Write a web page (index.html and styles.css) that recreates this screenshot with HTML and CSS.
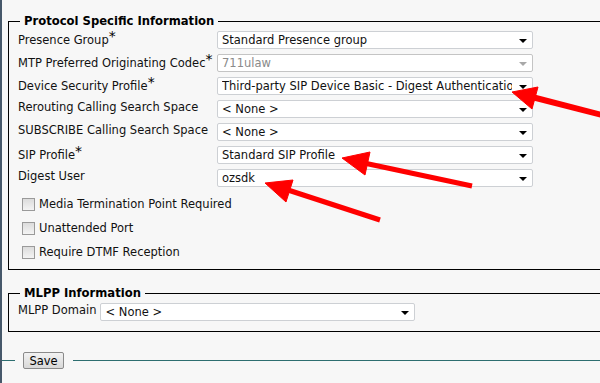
FILE: index.html
```html
<!DOCTYPE html>
<html lang="en">
<head>
  <meta charset="UTF-8">
  <title>Phone Configuration</title>
  <link rel="stylesheet" href="styles.css">
</head>
<body>
  <div class="page">
    <fieldset class="group">
      <legend>Protocol Specific Information</legend>
      <table class="form">
        <tr>
          <td class="label">Presence Group<span class="req">*</span></td>
          <td><span class="select"><select><option>Standard Presence group</option></select></span></td>
        </tr>
        <tr>
          <td class="label">MTP Preferred Originating Codec<span class="req">*</span></td>
          <td><span class="select disabled"><select disabled><option>711ulaw</option></select></span></td>
        </tr>
        <tr>
          <td class="label">Device Security Profile<span class="req">*</span></td>
          <td><span class="select"><select><option>Third-party SIP Device Basic - Digest Authentication</option></select></span></td>
        </tr>
        <tr>
          <td class="label">Rerouting Calling Search Space</td>
          <td><span class="select"><select><option>&lt; None &gt;</option></select></span></td>
        </tr>
        <tr>
          <td class="label">SUBSCRIBE Calling Search Space</td>
          <td><span class="select"><select><option>&lt; None &gt;</option></select></span></td>
        </tr>
        <tr>
          <td class="label">SIP Profile<span class="req">*</span></td>
          <td><span class="select"><select><option>Standard SIP Profile</option></select></span></td>
        </tr>
        <tr>
          <td class="label">Digest User</td>
          <td><span class="select"><select><option>ozsdk</option></select></span></td>
        </tr>
      </table>
      <div class="checks">
        <label class="check"><input type="checkbox"><span>Media Termination Point Required</span></label>
        <label class="check"><input type="checkbox"><span>Unattended Port</span></label>
        <label class="check"><input type="checkbox"><span>Require DTMF Reception</span></label>
      </div>
    </fieldset>

    <fieldset class="group mlpp">
      <legend>MLPP Information</legend>
      <div class="inline-row">
        <span class="label">MLPP Domain</span>
        <span class="select short"><select><option>&lt; None &gt;</option></select></span>
      </div>
    </fieldset>

    <div class="actions">
      <span class="rule lead"></span>
      <button class="btn">Save</button>
      <span class="rule"></span>
    </div>
  </div>

  <svg class="annotations" width="600" height="383" viewBox="0 0 600 383">
    <g fill="#f00" stroke="#f00">
      <line x1="532" y1="97" x2="602" y2="115" stroke-width="6"/>
      <polygon points="512,92 538,87 532,109" stroke-width="1"/>
      <line x1="364" y1="163" x2="472" y2="186" stroke-width="5"/>
      <polygon points="342,158 370,152 365,175" stroke-width="1"/>
      <line x1="288" y1="190" x2="380" y2="220" stroke-width="5"/>
      <polygon points="265,183 293,180 286,202" stroke-width="1"/>
    </g>
  </svg>
</body>
</html>
```

FILE: styles.css
```css
html,
body {
  margin: 0;
  padding: 0;
  height: 100%;
  overflow: hidden;
}

body {
  background: #f7f7f7;
  color: #111;
  font-family: 'DejaVu Sans', Verdana, sans-serif;
  font-size: 11.5px;
  border-left: 2px solid #46586a;
  box-sizing: border-box;
  position: relative;
}

.page {
  padding-left: 6px;
}

.group {
  margin: 13px 0 0;
  padding: 2px 9px 5px 9px;
  border: 1px solid #000;
  border-right: none;
}

.group legend {
  font-size: 11.6px;
  font-weight: bold;
  line-height: 16px;
  padding: 0 4px;
  margin-left: 2px;
  color: #000;
}

.form {
  border-collapse: collapse;
}

.form td {
  padding: 0 0 5px;
  vertical-align: top;
}

.form td.label {
  width: 199px;
  line-height: 14px;
  white-space: nowrap;
}

.req {
  color: #000;
  font-size: 14px;
  line-height: 10px;
  vertical-align: 3px;
}

.select {
  position: relative;
  display: inline-block;
}

.select select {
  appearance: none;
  -webkit-appearance: none;
  width: 316px;
  height: 18px;
  margin: 0;
  padding: 0 20px 0 4px;
  border: 1px solid #cdd0d4;
  border-radius: 2px;
  background: #fff;
  font-family: inherit;
  font-size: 11.5px;
  color: #111;
  box-sizing: border-box;
}

.select::after {
  content: "";
  position: absolute;
  right: 6px;
  top: 8px;
  border-left: 4px solid transparent;
  border-right: 4px solid transparent;
  border-top: 4px solid #000;
  pointer-events: none;
}

.select.disabled select {
  color: #8a8a8a;
  border-color: #c4c4c4;
  background: #fff;
  opacity: 1;
}

.select.disabled::after {
  border-top-color: #a8a8a8;
}

.select.short select {
  width: 315px;
}

.checks {
  display: flex;
  flex-direction: column;
}

.check {
  display: flex;
  align-items: center;
  height: 24px;
  white-space: nowrap;
}

.check input {
  appearance: none;
  -webkit-appearance: none;
  width: 13px;
  height: 13px;
  margin: 0 4px 0 4px;
  border: 1px solid #9a9a9a;
  background: linear-gradient(#dcdcdc, #f4f4f4);
  box-sizing: border-box;
}

.mlpp {
  margin-top: 15px;
  padding-bottom: 5px;
}

.inline-row {
  display: flex;
  align-items: flex-start;
  gap: 4px;
  height: 23px;
}

.inline-row .label {
  line-height: 14px;
}

.actions {
  display: flex;
  align-items: center;
  margin-top: 20px;
  margin-left: -6px;
}

.rule {
  flex: 1;
  height: 1px;
  background: #2d6e70;
}

.rule.lead {
  flex: none;
  width: 13px;
}

.btn {
  margin: 0 9px 0 8px;
  width: 41px;
  height: 17px;
  padding: 0;
  border: 1px solid #8a8a8a;
  border-radius: 2px;
  background: linear-gradient(#f2f2f2, #d8d8d8);
  font-family: inherit;
  font-size: 11.5px;
  color: #000;
}

.annotations {
  position: absolute;
  top: 0;
  left: -2px;
  pointer-events: none;
}
```
